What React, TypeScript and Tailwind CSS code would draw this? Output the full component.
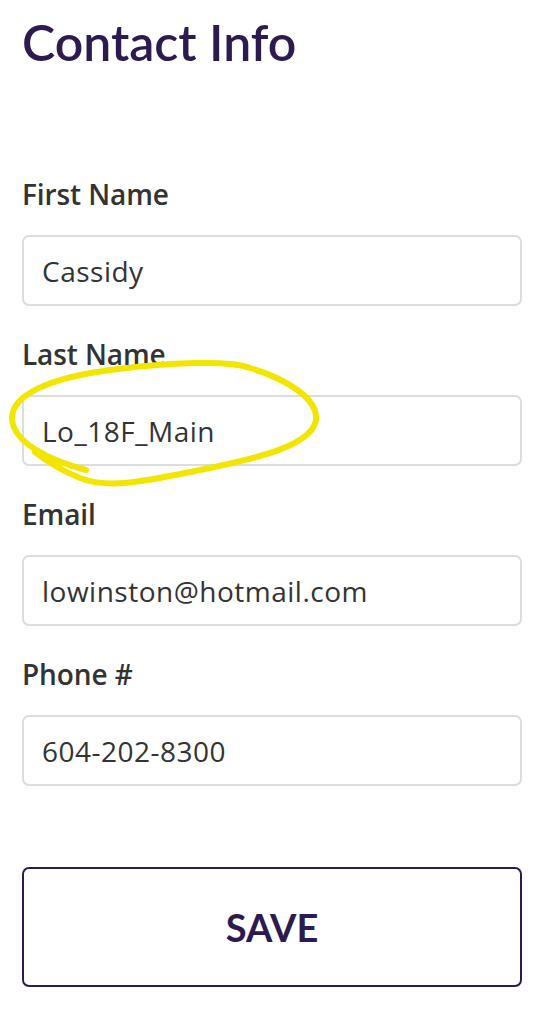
import React from "react";

const fields = [
  { label: "First Name", value: "Cassidy" },
  { label: "Last Name", value: "Lo_18F_Main" },
  { label: "Email", value: "lowinston@hotmail.com" },
  { label: "Phone #", value: "604-202-8300" },
];

export default function App() {
  return (
    <div className="relative min-h-[1024px] w-[554px] bg-white px-[22px] font-['Lato',sans-serif]">
      <h1 className="pt-[12px] text-[50px] font-semibold leading-[60px] text-[#2d1a4e]">
        Contact Info
      </h1>
      <div className="mt-[106px] flex flex-col gap-[32px] font-['Open_Sans',sans-serif]">
        {fields.map((f) => (
          <div key={f.label} className="flex flex-col">
            <label className="text-[28px] font-semibold leading-[32px] tracking-[-0.1px] text-[#333333]">{f.label}</label>
            <div className="mt-[25px] flex h-[71px] w-[500px] items-center rounded-[7px] border-2 border-[#dddddd] px-[18px] text-[28px] tracking-[0.5px] text-[#333333]">
              {f.value}
            </div>
          </div>
        ))}
      </div>
      <button className="mt-[81px] flex h-[120px] w-[500px] items-center justify-center rounded-[7px] border-2 border-[#2d1a4e] text-[38px] font-bold text-[#2d1a4e]">
        SAVE
      </button>
      <svg
        className="pointer-events-none absolute left-0 top-0"
        width="554"
        height="1024"
        viewBox="0 0 554 1024"
        fill="none"
      >
        <path
          d="M 86 470 C 55 462, 15 445, 12 420 C 10 395, 50 378, 110 370 C 170 362, 230 360, 250 368 C 290 380, 318 400, 316 420 C 312 445, 260 458, 200 470 C 150 480, 110 490, 80 478 C 60 470, 45 460, 35 452"
          stroke="#f2e600"
          strokeWidth="6"
          strokeLinecap="round"
          strokeLinejoin="round"
        />
      </svg>
    </div>
  );
}
